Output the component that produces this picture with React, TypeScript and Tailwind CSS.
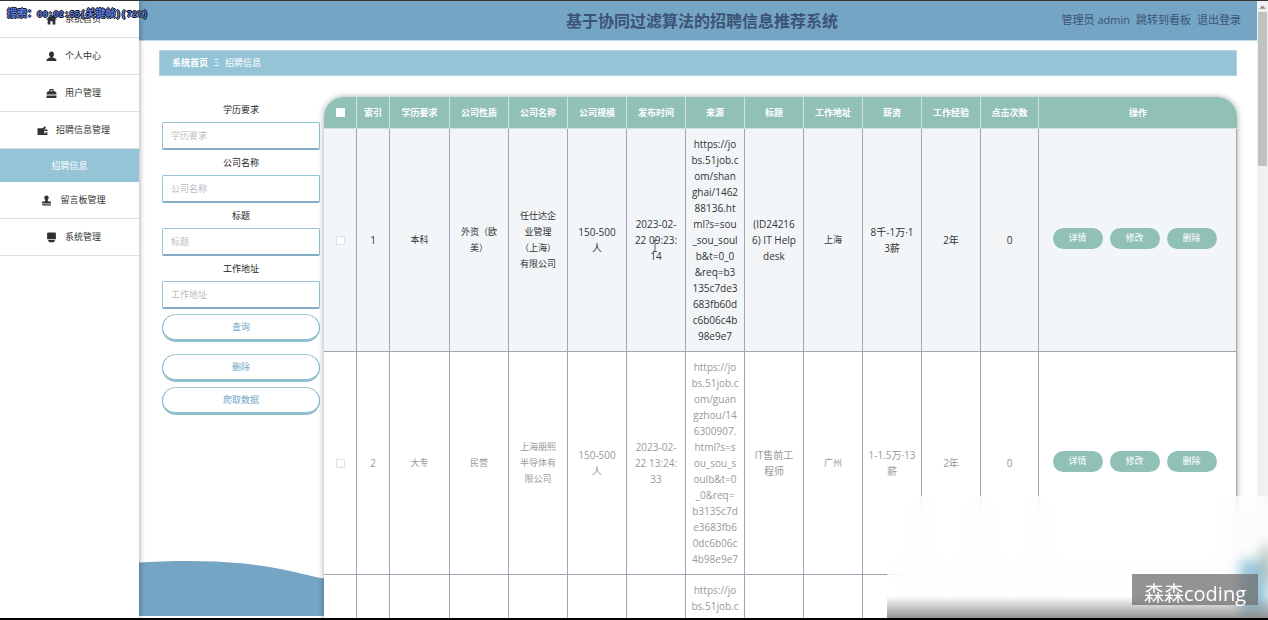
import React from "react";

const cjk = "font-['Open_Sans','Noto_Sans_CJK_SC',sans-serif]";

type IconName = "home" | "user" | "case" | "wallet" | "stamp" | "screen";

function Icon({ name }: { name: IconName }) {
  return (
    <svg viewBox="0 0 20 20" className="size-[11px] shrink-0 fill-[#2f3134]" aria-hidden="true">
      {name === "home" && <path d="M10 1 0 10h3v9h5v-6h4v6h5v-9h3L16 6.300V2h-3v1.700z" />}
      {name === "user" && (
        <path d="M10 1c2.800 0 4.500 2 4.500 4.800 0 2.200-1 4.200-2.500 5.200v.8c3.500.7 7 2 7 5V18H1v-1.200c0-3 3.500-4.300 7-5V11c-1.500-1-2.500-3-2.500-5.200C5.500 3 7.200 1 10 1z" />
      )}
      {name === "case" && (
        <path d="M6 6V3.500C6 2.700 6.700 2 7.500 2h5c.8 0 1.500.7 1.500 1.500V6h2.500L19 9v3H1V9l2.500-3zm2 0h4V4H8zM1 13.500h18V18H1z" />
      )}
      {name === "wallet" && (
        <path d="M1 6h9l5-4 1 4-4 2h7v3h-6v4h6v3H1zM15 12.500h4v1.500h-4z" />
      )}
      {name === "stamp" && (
        <path d="M10 1c2.200 0 4 1.600 4 3.800 0 2.200-1.800 3.200-1.800 5.200 0 1.200.8 2 2.300 2H18v3.500H2V12h3.500c1.500 0 2.300-.8 2.300-2 0-2-1.800-3-1.800-5.200C6 2.600 7.800 1 10 1zM2 17h16v2H2z" />
      )}
      {name === "screen" && (
        <path d="M4 1h12c1.200 0 2 .8 2 2v10H2V3c0-1.200.8-2 2-2zM3 14.500h14c0 1-.7 1.500-1.500 1.500H15v1.500c0 .8-.6 1-1.200 1H6.200c-.6 0-1.200-.2-1.200-1V16h-.5C3.700 16 3 15.500 3 14.500z" />
      )}
    </svg>
  );
}

const menu: { label: string; icon?: IconName }[] = [
  { label: "系统首页", icon: "home" },
  { label: "个人中心", icon: "user" },
  { label: "用户管理", icon: "case" },
  { label: "招聘信息管理", icon: "wallet" },
  { label: "招聘信息" },
  { label: "留言板管理", icon: "stamp" },
  { label: "系统管理", icon: "screen" },
];

const filters = ["学历要求", "公司名称", "标题", "工作地址"];

const columns = [
  "索引", "学历要求", "公司性质", "公司名称", "公司规模", "发布时间",
  "来源", "标题", "工作地址", "薪资", "工作经验", "点击次数",
];

const rows: string[][] = [
  [
    "1", "本科", "外资（欧\n美）", "任仕达企\n业管理\n（上海）\n有限公司", "150-500\n人",
    "2023-02-\n22 09:23:\n14",
    "https://jo\nbs.51job.c\nom/shan\nghai/1462\n88136.ht\nml?s=sou\n_sou_soul\nb&t=0_0\n&req=b3\n135c7de3\n683fb60d\nc6b06c4b\n98e9e7",
    "(ID24216\n6) IT Help\ndesk", "上海", "8千-1万·1\n3薪", "2年", "0",
  ],
  [
    "2", "大专", "民营", "上海朋熙\n半导体有\n限公司", "150-500\n人",
    "2023-02-\n22 13:24:\n33",
    "https://jo\nbs.51job.c\nom/guan\ngzhou/14\n6300907.\nhtml?s=s\nou_sou_s\noulb&t=0\n_0&req=\nb3135c7d\ne3683fb6\n0dc6b06c\n4b98e9e7",
    "IT售前工\n程师", "广州", "1-1.5万·13\n薪", "2年", "0",
  ],
  [
    "", "", "", "", "", "",
    "https://jo\nbs.51job.c\nom/shan\nghai/1462\n88136.ht\nml?s=sou\n_sou_soul\nb&t=0_0\n&req=b3\n135c7de3\n683fb60d\nc6b06c4b\n98e9e7",
    "", "", "", "", "",
  ],
];

const smallColumns = [1, 2, 3, 8];

function Sidebar() {
  return (
    <aside className="relative z-20 w-[139px] shrink-0 bg-white shadow-[1px_0_5px_rgba(0,0,0,0.3)]">
      <nav className="flex flex-col">
        {menu.map(({ label, icon }) =>
          icon ? (
            <a
              key={label}
              href="#"
              className="flex h-[37px] items-center justify-center gap-2 border-b border-[#dedede] pl-2 text-[9px] text-[#333]"
            >
              <Icon name={icon} />
              {label}
            </a>
          ) : (
            <a
              key={label}
              href="#"
              aria-current="page"
              className="flex h-[33px] items-center justify-center bg-[#94c4d6] text-[9px] text-white"
            >
              {label}
            </a>
          ),
        )}
      </nav>
      <div className="absolute top-1 left-[7px] font-['Liberation_Mono','Noto_Sans_CJK_SC',monospace] text-[9px] leading-5 font-bold whitespace-nowrap text-[#5b7be0] [text-shadow:1px_0_#111,-1px_0_#111,0_1px_#111,0_-1px_#111]">
        <span className="text-[10px]">搜索：</span>00:02:55(<span className="text-[10px]">关键帧</span>)(72%)
      </div>
    </aside>
  );
}

function SearchForm() {
  return (
    <form className="flex w-[165px] shrink-0 flex-col pr-1 pl-[3px]" onSubmit={(e) => e.preventDefault()}>
      {filters.map((f) => (
        <label key={f} className="flex flex-col text-center text-[9px] leading-[25px] text-[#222]">
          {f}
          <input
            type="text"
            placeholder={f}
            className="h-7 w-full rounded-[2px] border border-b-2 border-[#94c4d6] border-b-[#84adca] bg-white px-2 text-[9px] outline-none placeholder:text-[#b9bcc2]"
          />
        </label>
      ))}
      <div className="flex flex-col pt-[5px]">
        <button className="mb-3 h-7 rounded-full border border-b-[3px] border-[#9fcbd0] border-x-[#84b3ca] border-b-[#8fbfca] bg-white text-[9px] text-[#74a5c5]">
          查询
        </button>
        <button className="mb-[5px] h-7 rounded-full border border-b-[3px] border-[#9fcbd0] border-x-[#84b3ca] border-b-[#8fbfca] bg-white text-[9px] text-[#74a5c5]">
          删除
        </button>
        <button className="h-7 rounded-full border border-b-[3px] border-[#9fcbd0] border-x-[#84b3ca] border-b-[#8fbfca] bg-white text-[9px] text-[#74a5c5]">
          爬取数据
        </button>
      </div>
    </form>
  );
}

function JobTable() {
  return (
    <div className="relative z-10 min-w-0 flex-1 self-start rounded-t-[20px] bg-white shadow-[0_0_6px_rgba(0,0,0,0.35)]">
      <table className="w-full table-fixed border-separate border-spacing-0 text-center text-[9px]">
        <colgroup>
          <col className="w-[33px]" />
          <col className="w-[33px]" />
          <col className="w-[60px]" />
          {columns.slice(2).map((c, i) => (
            <col key={c} className={i < 9 ? "w-[59px]" : "w-[58px]"} />
          ))}
          <col />
        </colgroup>
        <thead>
          <tr className="h-8 text-white">
            <th className="rounded-tl-[20px] border-r border-b border-[#cfe3de] bg-[#90c0b6] p-0">
              <input type="checkbox" aria-label="全选" className="mx-auto block size-[9px] appearance-none rounded-[1px] bg-white" />
            </th>
            {columns.map((c) => (
              <th key={c} className="border-r border-b border-[#cfe3de] bg-[#90c0b6] p-0 font-bold">
                {c}
              </th>
            ))}
            <th className="rounded-tr-[20px] border-b border-[#cfe3de] bg-[#90c0b6] p-0 font-bold">操作</th>
          </tr>
        </thead>
        <tbody>
          {rows.map((row, r) => (
            <tr key={r} className={r === 0 ? "bg-[#f2f6f8] text-[#333]" : "bg-white text-[#999]"}>
              <td className="border-r border-b border-[#a3a5b4] p-0">
                <input
                  type="checkbox"
                  aria-label={`选择第 ${r + 1} 行`}
                  className="mx-auto block size-[9px] appearance-none rounded-[1px] border border-[#dcdfe6] bg-white"
                />
              </td>
              {row.map((cell, c) => (
                <td
                  key={c}
                  className={
                    smallColumns.includes(c)
                      ? "border-r border-b border-[#a3a5b4] px-0 py-[7px] leading-4 whitespace-pre"
                      : "border-r border-b border-[#a3a5b4] px-0 py-[7px] text-[10px] leading-4 whitespace-pre"
                  }
                >
                  {cell}
                </td>
              ))}
              <td className="border-r border-b border-[#a3a5b4] px-0 pb-1">
                {row[0] && (
                  <div className="flex justify-center gap-[7px] pr-1.5">
                    {["详情", "修改", "删除"].map((a) => (
                      <button key={a} className="h-[21px] w-[50px] rounded-full bg-[#90c0b6] text-[9px] text-white">
                        {a}
                      </button>
                    ))}
                  </div>
                )}
              </td>
            </tr>
          ))}
        </tbody>
      </table>
    </div>
  );
}

function Scrollbar() {
  return (
    <div className="flex w-[11px] shrink-0 flex-col items-center bg-[#f1f1f1]">
      <svg viewBox="0 0 10 10" className="size-[11px] fill-[#8a8a8a]" aria-hidden="true">
        <path d="M2 7 5 4l3 3z" />
      </svg>
      <div className="h-[154px] w-[9px] bg-[#c1c1c1]" />
    </div>
  );
}

export default function App() {
  return (
    <div className={`relative flex h-screen overflow-hidden border-t border-b-2 border-t-[#333] border-b-black bg-white ${cjk}`}>
      <Sidebar />
      <main className="relative flex min-w-0 flex-1 flex-col">
        <header className="grid h-10 shrink-0 grid-cols-[1fr_auto_1fr] items-center border-b border-[#b9dce8] bg-[#74a5c5] px-4 text-[#3d5373]">
          <h1 className="col-start-2 pl-2 text-[16px] font-bold">基于协同过滤算法的招聘信息推荐系统</h1>
          <div className="flex justify-end gap-1.5 text-[11px]">
            <span>管理员 admin</span>
            <a href="#">跳转到看板</a>
            <a href="#">退出登录</a>
          </div>
        </header>
        <div className="flex min-h-0 flex-1 flex-col px-5 pt-[9px]">
          <div className="flex h-[26px] shrink-0 items-center gap-1.5 border border-[#b4d2de] bg-[#94c4d6] px-3 text-[9px] text-white">
            <a href="#" className="font-bold">系统首页</a>
            <span>Ξ</span>
            <span>招聘信息</span>
          </div>
          <div className="flex min-h-0 flex-1 pt-[21px]">
            <SearchForm />
            <JobTable />
          </div>
        </div>
        <svg
          viewBox="0 0 185 56"
          preserveAspectRatio="none"
          className="absolute bottom-[2px] left-0 h-14 w-[185px] fill-[#74a5c5]"
          aria-hidden="true"
        >
          <path d="M0 2.500C30 .5 70 0 105 3.500s60 11 80 15V56H0z" />
        </svg>
      </main>
      <Scrollbar />
      <svg viewBox="0 0 6 12" className="absolute top-[239px] left-[652px] z-20 h-3 w-1.5 fill-none stroke-[#555]" aria-hidden="true">
        <path d="M1 .5h4M3 .5v11M1 11.500h4" />
      </svg>
      <div className="absolute right-0 -bottom-[2px] z-30 flex h-[124px] w-[381px] items-end justify-end overflow-hidden bg-white/60 pb-[15px] backdrop-blur-md">
        <div className="absolute top-[64px] right-0 h-20 w-7 bg-[#7fb9d3] opacity-80 blur-[6px]" />
        <div className="absolute top-[50px] -right-1 h-9 w-3 bg-[#a9b8ae] opacity-70 blur-[6px]" />
        <div className="absolute inset-x-0 bottom-0 h-6 bg-linear-to-t from-[#8c8c8c] to-transparent" />
        <div className="relative mr-2.5 flex h-[31px] w-[126px] items-center justify-center bg-[#6f6f6f]/75 pt-2 text-[20px] leading-none text-white">
          森森coding
        </div>
      </div>
    </div>
  );
}
